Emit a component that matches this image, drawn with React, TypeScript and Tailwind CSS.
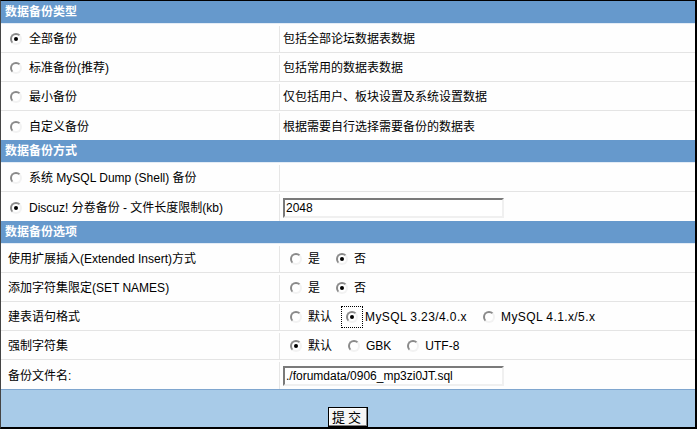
import React from 'react';

const FONT = { fontFamily: '"Liberation Sans", "Noto Sans CJK SC", sans-serif' };

const Radio: React.FC<{ checked?: boolean; focused?: boolean }> = ({ checked, focused }) => {
  const dot = (
    <span className="flex h-[12px] w-[12px] shrink-0 items-center justify-center rounded-full border-2 border-t-[#8a8a8a] border-l-[#8a8a8a] border-r-[#f2f2f2] border-b-[#f2f2f2] bg-white">
      {checked && <span className="h-[4px] w-[4px] rounded-full bg-black" />}
    </span>
  );
  if (focused) {
    return (
      <span className="flex h-[22px] w-[22px] items-center justify-center border border-dotted border-black">{dot}</span>
    );
  }
  return dot;
};

const Header: React.FC<{ title: string }> = ({ title }) => (
  <div className="flex h-[23px] items-center border-b border-[#e3ecf6] bg-[#6699cc] pl-[4px] text-[12px] font-bold text-white">
    {title}
  </div>
);

const Row: React.FC<{ left: React.ReactNode; right?: React.ReactNode; last?: boolean }> = ({ left, right, last }) => (
  <div className={`flex h-[29px] bg-[#fefefe] pt-[2px] ${last ? '' : 'border-b border-[#e4e4e4]'}`}>
    <div className="flex w-[279px] items-center border-r border-[#e6e6e6]">{left}</div>
    <div className="flex flex-1 items-center pl-[3px]">{right}</div>
  </div>
);

const RadioLabel: React.FC<{ label: string; checked?: boolean }> = ({ label, checked }) => (
  <div className="flex items-center pl-[9px]">
    <Radio checked={checked} />
    <span className="ml-[7px]">{label}</span>
  </div>
);

const Opt: React.FC<{ label: string; checked?: boolean; focused?: boolean; first?: boolean; wide?: boolean }> = ({
  label,
  checked,
  focused,
  first,
  wide,
}) => (
  <div className={`flex items-center ${first ? 'ml-[7px]' : focused ? 'ml-[9px]' : 'ml-[16px]'}`}>
    <Radio checked={checked} focused={focused} />
    <span className={`${focused ? 'ml-[2px]' : 'ml-[6px]'} ${wide ? 'tracking-[0.4px]' : ''}`}>{label}</span>
  </div>
);

const TextBox: React.FC<{ value: string }> = ({ value }) => (
  <div className="flex h-[20px] w-[221px] items-center border-2 border-t-[#7a7a7a] border-l-[#7a7a7a] border-r-[#f0f0f0] border-b-[#f0f0f0] bg-white pl-[1px] text-[12px]">
    {value}
  </div>
);

const Plain: React.FC<{ text: string }> = ({ text }) => <span className="pl-[7px]">{text}</span>;

export default function App() {
  return (
    <div style={FONT} className="flex h-[429px] w-[697px] flex-col border-t border-l border-r-2 border-b-2 border-t-black border-l-[#444] border-r-black border-b-black text-[12px] text-black">
      <Header title="数据备份类型" />
      <Row left={<RadioLabel label="全部备份" checked />} right={<span>包括全部论坛数据表数据</span>} />
      <Row left={<RadioLabel label="标准备份(推荐)" />} right={<span>包括常用的数据表数据</span>} />
      <Row left={<RadioLabel label="最小备份" />} right={<span>仅包括用户、板块设置及系统设置数据</span>} />
      <Row left={<RadioLabel label="自定义备份" />} right={<span>根据需要自行选择需要备份的数据表</span>} last />

      <Header title="数据备份方式" />
      <Row left={<RadioLabel label="系统 MySQL Dump (Shell) 备份" />} />
      <Row left={<RadioLabel label="Discuz! 分卷备份 - 文件长度限制(kb)" checked />} right={<TextBox value="2048" />} last />

      <Header title="数据备份选项" />
      <Row
        left={<Plain text="使用扩展插入(Extended Insert)方式" />}
        right={
          <>
            <Opt label="是" first />
            <Opt label="否" checked />
          </>
        }
      />
      <Row
        left={<Plain text="添加字符集限定(SET NAMES)" />}
        right={
          <>
            <Opt label="是" first />
            <Opt label="否" checked />
          </>
        }
      />
      <Row
        left={<Plain text="建表语句格式" />}
        right={
          <>
            <Opt label="默认" first />
            <Opt label="MySQL 3.23/4.0.x" checked focused wide />
            <Opt label="MySQL 4.1.x/5.x" wide />
          </>
        }
      />
      <Row
        left={<Plain text="强制字符集" />}
        right={
          <>
            <Opt label="默认" checked first />
            <Opt label="GBK" />
            <Opt label="UTF-8" />
          </>
        }
      />
      <Row left={<Plain text="备份文件名:" />} right={<TextBox value="./forumdata/0906_mp3zi0JT.sql" />} last />

      <div className="flex flex-1 justify-center border-t border-[#7fa6cf] bg-[#a8cbe8] pt-[17px]">
        <button className="h-[20px] w-[40px] border border-black bg-[#f6f6f6] text-[13px] leading-none tracking-[3px] shadow-[inset_-1px_-1px_0_#808080,inset_1px_1px_0_#ffffff]">
          提交
        </button>
      </div>
    </div>
  );
}
